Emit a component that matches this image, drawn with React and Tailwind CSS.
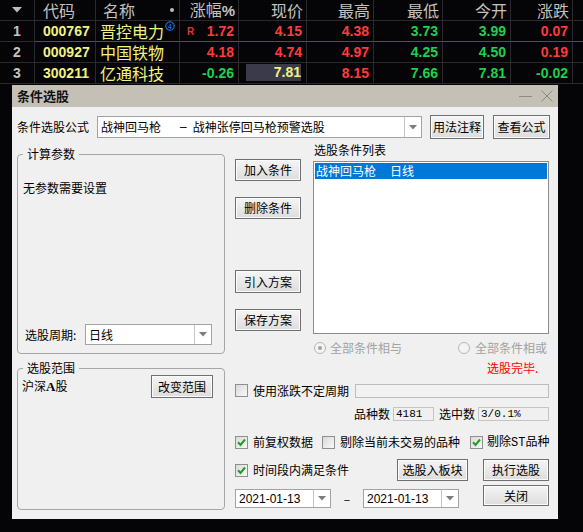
import React from "react";

const CJK = "font-['Noto_Sans_CJK_SC',sans-serif]";
const NUM = "font-['Liberation_Sans',sans-serif] font-bold text-[14px]";

const RED = "text-[#ff3b3b]";
const GRN = "text-[#1ed04e]";
const YEL = "text-[#f2f282]";

const rows = [
  {
    n: "1", code: "000767", name: "晋控电力", badge: true, r: true,
    vals: [["1.72", RED], ["4.15", RED], ["4.38", RED], ["3.73", GRN], ["3.99", GRN], ["0.07", RED]],
  },
  {
    n: "2", code: "000927", name: "中国铁物",
    vals: [["4.18", RED], ["4.74", RED], ["4.97", RED], ["4.25", GRN], ["4.50", GRN], ["0.19", RED]],
  },
  {
    n: "3", code: "300211", name: "亿通科技", hl: true,
    vals: [["-0.26", GRN], ["7.81", YEL], ["8.15", RED], ["7.66", GRN], ["7.81", GRN], ["-0.02", GRN]],
  },
];

const headers = ["涨幅%", "现价", "最高", "最低", "今开", "涨跌"];

const DropArrow = () => (
  <svg width="8" height="5" viewBox="0 0 8 5">
    <path d="M0 0H8L4 4.5Z" fill="#7c7c7c" />
  </svg>
);

const Combo = ({ className, text, textClass = "" }) => (
  <div className={`flex items-stretch bg-white border border-[#a3a3a3] ${className}`}>
    <div className={`flex-1 flex items-center pl-[3px] overflow-hidden whitespace-nowrap ${textClass}`}>{text}</div>
    <div className="w-[17px] border-l border-[#c6c6c6] flex items-center justify-center">
      <DropArrow />
    </div>
  </div>
);

const Btn = ({ className, children }) => (
  <div
    className={`flex items-center justify-center border border-[#707070] bg-linear-to-b from-[#f5f5f5] to-[#dddddd] shadow-[inset_0_0_0_1px_#fbfbfb] text-[12px] leading-[14px] text-black ${className}`}
  >
    {children}
  </div>
);

const Check = ({ checked }) => (
  <div className="w-[13px] h-[13px] shrink-0 border border-[#8e8f8f] bg-linear-to-br from-[#dadada] to-[#f8f8f8] flex items-center justify-center">
    {checked && (
      <svg width="9" height="9" viewBox="0 0 9 9">
        <path d="M1 4.3L3.5 7L8 1.5" fill="none" stroke="#1f9f1f" strokeWidth="2" />
      </svg>
    )}
  </div>
);

const Radio = ({ checked }) => (
  <div className="w-[12px] h-[12px] shrink-0 rounded-full border border-[#b4b4b4] bg-[#f4f4f4] flex items-center justify-center">
    {checked && <div className="w-[4px] h-[4px] rounded-full bg-[#a0a0a0]" />}
  </div>
);

const StockTable = () => {
  const cols = "grid grid-cols-[35px_61px_84px_59px_68px_67px_69px_68px_62px_10px]";
  const cell = "h-[21px] border-b border-r border-[#2a2a2e] flex items-center";
  return (
    <div className={`${cols} shrink-0`}>
      {/* header */}
      <div className={`${cell} justify-center`}>
        <svg width="10" height="6" viewBox="0 0 10 6">
          <path d="M0 0H10L5 5.5Z" fill="#bdbdbd" />
        </svg>
      </div>
      <div className={`${cell} pl-[8px] text-[16px] leading-[20px] text-[#c2c2c2] ${CJK}`}>代码</div>
      <div className={`${cell} pl-[7px] pr-[5px] justify-between text-[16px] leading-[20px] text-[#c2c2c2] ${CJK}`}>
        <span>名称</span>
        <span className="w-[4px] h-[4px] rounded-full bg-[#bdbdbd]" />
      </div>
      {headers.map((h, i) => (
        <div
          key={h}
          className={`${cell} justify-end pr-[3px] text-[16px] leading-[20px] text-[#c2c2c2] ${CJK}`}
        >
          {i === 0 ? (
            <span>
              涨幅<span className="font-['Liberation_Sans',sans-serif] font-bold text-[15px]">%</span>
            </span>
          ) : (
            h
          )}
        </div>
      ))}
      <div className="h-[21px] border-b border-[#2a2a2e]" />

      {rows.map((r) => {
        const line = r.n === "1" ? "border-b-[#52467a]" : "";
        return (
          <React.Fragment key={r.n}>
            <div className={`${cell} justify-center ${NUM} text-[#c4c4c4]`}>{r.n}</div>
            <div className={`${cell} ${line} pl-[8px] ${NUM} ${YEL}`}>{r.code}</div>
            <div className={`${cell} ${line} pl-[4px] items-center text-[16px] leading-[20px] ${YEL} ${CJK}`}>
              <span>{r.name}</span>
              {r.badge && (
                <svg width="10" height="10" viewBox="0 0 10 10" className="self-start ml-[1px]">
                  <circle cx="5" cy="5" r="4.2" fill="none" stroke="#2b8fff" strokeWidth="1" />
                  <text x="5" y="7.6" fontSize="7" textAnchor="middle" fill="#2b8fff" fontFamily="Liberation Sans">
                    4
                  </text>
                </svg>
              )}
            </div>
            {r.vals.map(([v, c], i) => {
              if (i === 0) {
                return (
                  <div key={i} className={`${cell} ${line} pl-[7px] pr-[4px] justify-between`}>
                    <span className="self-end mb-[4px] font-['Liberation_Sans',sans-serif] font-bold text-[10px] leading-none text-[#e03333]">
                      {r.r ? "R" : ""}
                    </span>
                    <span className={`${NUM} ${c}`}>{v}</span>
                  </div>
                );
              }
              if (i === 1 && r.hl) {
                return (
                  <div key={i} className={`${cell} ${line} pl-[7px] pr-[5px] pt-[1px] pb-[2px] items-stretch`}>
                    <div className={`flex-1 bg-[#3a3a4a] flex items-center justify-end ${NUM} ${c}`}>{v}</div>
                  </div>
                );
              }
              return (
                <div key={i} className={`${cell} ${line} justify-end pr-[4px] ${NUM} ${c}`}>
                  {v}
                </div>
              );
            })}
            <div className={`h-[21px] border-b border-[#2a2a2e] ${line}`} />
          </React.Fragment>
        );
      })}
    </div>
  );
};

const Dialog = () => (
  <div className={`ml-[12px] w-[546px] h-[434px] shrink-0 flex flex-col bg-[#f0f0f0] text-black ${CJK}`}>
    {/* title bar */}
    <div className="h-[22px] shrink-0 bg-[#c4c0b6] flex items-center justify-between pl-[5px] pr-[5px]">
      <span className="font-bold text-[13px] leading-[16px] text-[#111]">条件选股</span>
      <div className="flex items-center gap-[8px]">
        <svg width="14" height="12" viewBox="0 0 14 12">
          <path d="M0 6.5H13" stroke="#8a8a8a" strokeWidth="1" />
        </svg>
        <svg width="12" height="12" viewBox="0 0 12 12">
          <path d="M0.5 0.5L11.5 11.5M11.5 0.5L0.5 11.5" stroke="#8a8a8a" strokeWidth="1" />
        </svg>
      </div>
    </div>

    <div className="flex-1 px-[5px] pt-[8px] text-[12px] leading-[14px]">
      {/* formula row */}
      <div className="flex items-center h-[24px]">
        <div className="w-[80px]">条件选股公式</div>
        <Combo
          className="w-[325px] h-[22px]"
          text={
            <>
              <span>战神回马枪</span>
              <span className="ml-[19px] font-['Liberation_Sans',sans-serif]">–</span>
              <span className="ml-[6px]">战神张停回马枪预警选股</span>
            </>
          }
        />
        <Btn className="ml-[8px] w-[54px] h-[24px]">用法注释</Btn>
        <Btn className="ml-[9px] w-[57px] h-[24px]">查看公式</Btn>
      </div>

      {/* main */}
      <div className="flex mt-[3px]">
        {/* left column */}
        <div className="w-[208px] mt-[4px] flex flex-col">
          <fieldset className="border border-[#a6a6a6] rounded-[4px] h-[208px]">
            <legend className="ml-[5px] px-[4px] leading-[16px]">计算参数</legend>
            <div className="pl-[5px] mt-[19px]">无参数需要设置</div>
            <div className="flex items-center mt-[129px] pl-[7px]">
              <span className="w-[60px]">选股周期:</span>
              <Combo className="w-[127px] h-[21px]" text="日线" />
            </div>
          </fieldset>
          <fieldset className="border border-[#a6a6a6] rounded-[4px] h-[150px] mt-[6px]">
            <legend className="ml-[5px] px-[4px] leading-[16px]">选股范围</legend>
            <div className="flex items-center justify-between pl-[4px] pr-[11px] h-[23px] -mt-[1px]">
              <span>
                沪深<span className="font-['Liberation_Serif',serif] font-bold text-[13px]">A</span>股
              </span>
              <Btn className="w-[62px] h-[23px]">改变范围</Btn>
            </div>
          </fieldset>
        </div>

        {/* right section */}
        <div className="ml-[10px] w-[314px] flex flex-col">
          <div className="flex">
            <div className="w-[66px] flex flex-col">
              <Btn className="mt-[17px] h-[22px]">加入条件</Btn>
              <Btn className="mt-[16px] h-[22px]">删除条件</Btn>
              <Btn className="mt-[51px] h-[23px]">引入方案</Btn>
              <Btn className="mt-[16px] h-[22px]">保存方案</Btn>
            </div>
            <div className="ml-[12px] w-[236px] flex flex-col">
              <div className="h-[15px] leading-[15px] pl-[1px]">选股条件列表</div>
              <div className="mt-[4px] h-[173px] bg-white border border-[#8c8c8c] p-[1px]">
                <div className="h-[16px] bg-[#0078d7] text-white flex items-center pl-[1px]">
                  <span>战神回马枪</span>
                  <span className="ml-[14px]">日线</span>
                </div>
              </div>
              <div className="mt-[7px] h-[14px] flex items-center text-[#a2a2a2]">
                <div className="ml-[1px] flex items-center">
                  <Radio checked />
                  <span className="ml-[4px]">全部条件相与</span>
                </div>
                <div className="ml-[56px] flex items-center">
                  <Radio />
                  <span className="ml-[5px]">全部条件相或</span>
                </div>
              </div>
              <div className="mt-[6px] h-[14px] pl-[174px] text-[#ff0000] whitespace-nowrap">选股完毕.</div>
            </div>
          </div>

          {/* row A */}
          <div className="mt-[8px] h-[15px] flex items-center">
            <Check />
            <span className="ml-[5px]">使用涨跌不定周期</span>
            <div className="ml-auto w-[194px] h-[14px] border border-[#bcbcbc] bg-[#f2f2f2]" />
          </div>

          {/* row B */}
          <div className="mt-[9px] h-[14px] flex items-center justify-end">
            <span>品种数</span>
            <div className="ml-[3px] w-[41px] h-[14px] border border-[#c4c4c4] bg-[#f0f0f0] flex items-center pl-[2px] font-['Liberation_Mono',monospace] text-[11px]">
              4181
            </div>
            <span className="ml-[5px]">选中数</span>
            <div className="ml-[3px] w-[71px] h-[14px] border border-[#c4c4c4] bg-[#f0f0f0] flex items-center pl-[2px] font-['Liberation_Mono',monospace] text-[11px]">
              3/0.1%
            </div>
          </div>

          {/* row C */}
          <div className="mt-[14px] h-[14px] flex items-center whitespace-nowrap">
            <Check checked />
            <span className="ml-[5px]">前复权数据</span>
            <div className="ml-[9px]">
              <Check />
            </div>
            <span className="ml-[5px]">剔除当前未交易的品种</span>
            <div className="ml-[10px]">
              <Check checked />
            </div>
            <span className="ml-[4px]">
              剔除<span className="font-['Liberation_Mono',monospace] text-[12px]">ST</span>品种
            </span>
          </div>

          {/* row D */}
          <div className="mt-[10px] h-[22px] flex items-center whitespace-nowrap">
            <Check checked />
            <span className="ml-[5px]">时间段内满足条件</span>
            <Btn className="ml-[48px] w-[71px] h-[22px]">选股入板块</Btn>
            <Btn className="ml-[15px] w-[66px] h-[22px]">执行选股</Btn>
          </div>

          {/* row E */}
          <div className="mt-[4px] h-[22px] flex items-start">
            <Combo
              className="mt-[4px] w-[96px] h-[19px]"
              text="2021-01-13"
              textClass="font-['Liberation_Sans',sans-serif] text-[12px]"
            />
            <div className="w-[32px] mt-[4px] h-[19px] flex items-center justify-center">–</div>
            <Combo
              className="mt-[4px] w-[96px] h-[19px]"
              text="2021-01-13"
              textClass="font-['Liberation_Sans',sans-serif] text-[12px]"
            />
            <Btn className="ml-[24px] w-[66px] h-[21px]">关闭</Btn>
          </div>
        </div>
      </div>
    </div>
  </div>
);

export default function App() {
  return (
    <div className="w-[583px] h-[532px] bg-[#050507] overflow-hidden flex flex-col">
      <StockTable />
      <div className="h-[1px] shrink-0" />
      <Dialog />
    </div>
  );
}
